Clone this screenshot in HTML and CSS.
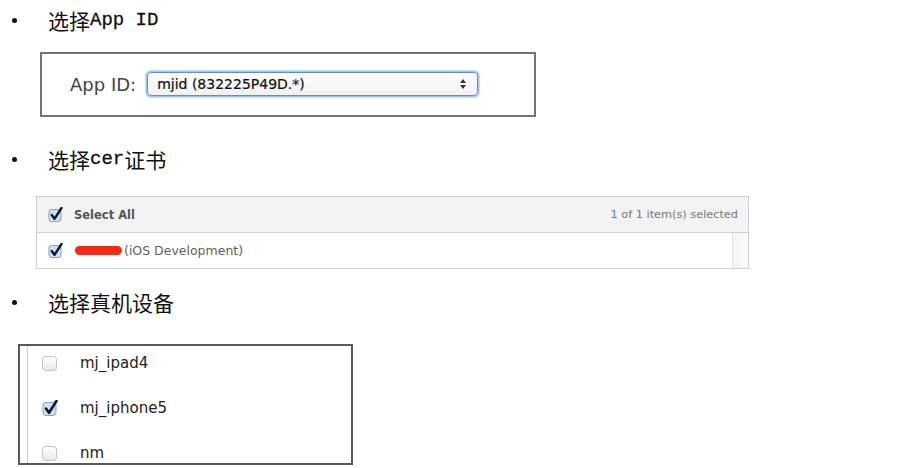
FILE: index.html
```html
<!DOCTYPE html>
<html lang="zh-CN">
<head>
<meta charset="utf-8">
<title>Provisioning</title>
<link rel="stylesheet" href="styles.css">
</head>
<body>
<div class="heading h1"><span class="bullet"></span><span class="cjk">选择</span><span class="mono">App ID</span></div>

<div class="appbox">
  <span class="applabel">App ID:</span>
  <div class="select">
    <span class="seltext">mjid (832225P49D.*)</span>
    <svg class="arrows" width="8" height="12" viewBox="0 0 8 12"><path d="M4 1 L7 5 H1 Z" fill="#333"/><path d="M4 11 L7 7 H1 Z" fill="#333"/></svg>
  </div>
</div>

<div class="heading h2"><span class="bullet"></span><span class="cjk">选择</span><span class="mono">cer</span><span class="cjk">证书</span></div>

<div class="table">
  <div class="thead">
    <svg class="cb" width="15" height="15" viewBox="0 0 15 15"><rect x="1" y="2.5" width="12" height="12" rx="2.5" fill="#cfe0f4" stroke="#8d9db3"/><path d="M3.8 8 L6.5 11.8 L13.5 1" fill="none" stroke="#0c1733" stroke-width="2.4" stroke-linecap="round" stroke-linejoin="round"/></svg>
    <span class="selall">Select All</span>
    <span class="count">1 of 1 item(s) selected</span>
  </div>
  <div class="trow">
    <div class="tcell">
      <svg class="cb" width="15" height="15" viewBox="0 0 15 15"><rect x="1" y="2.5" width="12" height="12" rx="2.5" fill="#cfe0f4" stroke="#8d9db3"/><path d="M3.8 8 L6.5 11.8 L13.5 1" fill="none" stroke="#0c1733" stroke-width="2.4" stroke-linecap="round" stroke-linejoin="round"/></svg>
      <span class="redact"></span><span class="certname">(iOS Development)</span>
    </div>
    <div class="scroll"></div>
  </div>
</div>

<div class="heading h3"><span class="bullet"></span><span class="cjk">选择真机设备</span></div>

<div class="devbox">
  <div class="devinner">
    <div class="dev"><span class="ucb"></span><span class="devname">mj_ipad4</span></div>
    <div class="dev"><svg class="cb big" width="16" height="16" viewBox="0 0 16 16"><rect x="1" y="2.5" width="13" height="13" rx="3" fill="#cfe0f4" stroke="#8d9db3"/><path d="M4 8.5 L7 12.8 L14.5 1" fill="none" stroke="#0c1733" stroke-width="2.6" stroke-linecap="round" stroke-linejoin="round"/></svg><span class="devname tight">mj_iphone5</span></div>
    <div class="dev"><span class="ucb"></span><span class="devname">nm</span></div>
  </div>
</div>
</body>
</html>
```

FILE: styles.css
```css
html, body {
  margin: 0;
  padding: 0;
  background: #ffffff;
}
body {
  width: 901px;
  height: 468px;
  overflow: hidden;
  font-family: "DejaVu Sans", sans-serif;
}
.heading {
  display: flex;
  align-items: center;
  height: 28px;
  padding-left: 12px;
  color: #111;
}
.h1 { margin-top: 6px; }
.h2 { margin-top: 28px; }
.h3 { margin-top: 19px; }
.bullet {
  width: 5px;
  height: 5px;
  border-radius: 50%;
  background: #111;
  margin-right: 31px;
}
.cjk {
  font-family: "Noto Sans CJK SC", sans-serif;
  font-size: 21px;
  line-height: 28px;
}
.mono {
  font-family: "Liberation Mono", monospace;
  font-size: 19px;
  line-height: 28px;
  font-weight: 500;
  -webkit-text-stroke: 0.3px #111;
}

.appbox {
  margin: 18px 0 0 40px;
  width: 496px;
  height: 65px;
  box-sizing: border-box;
  border: 2px solid #727272;
  display: flex;
  align-items: center;
  padding-left: 28px;
  padding-bottom: 1px;
}
.applabel {
  font-size: 18px;
  color: #444;
  margin-right: 11px;
}
.select {
  width: 331px;
  height: 24px;
  box-sizing: border-box;
  border: 1px solid #5a8fd2;
  border-radius: 4px;
  box-shadow: 0 0 0 1.5px #a8c7ee, 0 0 3px 1px #c9dcf3;
  background: linear-gradient(#ffffff, #f1f1f1);
  display: flex;
  align-items: center;
  padding: 0 10px 0 9px;
}
.seltext {
  flex: 1;
  font-size: 14px;
  color: #111;
  -webkit-text-stroke: 0.2px #111;
}
.arrows { display: block; }

.table {
  margin: 23px 0 0 36px;
  width: 713px;
  border: 1px solid #cfcfcf;
  box-sizing: border-box;
}
.thead {
  height: 35px;
  background: #f3f3f3;
  border-bottom: 1px solid #d0d0d0;
  display: flex;
  align-items: center;
  padding-left: 11px;
  padding-right: 10px;
}
.cb { display: block; flex: none; }
.selall {
  font-weight: bold;
  font-size: 11.5px;
  color: #555;
  margin-left: 11px;
  flex: 1;
}
.count {
  font-size: 11.3px;
  color: #777;
}
.trow {
  height: 35px;
  display: flex;
}
.tcell {
  flex: 1;
  display: flex;
  align-items: center;
  padding-left: 11px;
}
.redact {
  width: 47px;
  height: 9px;
  border-radius: 5px;
  background: #f42a18;
  margin-left: 12px;
}
.certname {
  font-size: 12.5px;
  color: #5f5f5f;
  margin-left: 2px;
}
.scroll {
  width: 15px;
  border-left: 1px solid #e2e2e2;
  background: linear-gradient(90deg, #f4f4f4, #fbfbfb);
}

.devbox {
  margin: 28px 0 0 18px;
  width: 335px;
  height: 121px;
  box-sizing: border-box;
  border: 2px solid #5a5a5a;
  overflow: hidden;
}
.devinner {
  margin-left: 7px;
  border-left: 1px solid #cdcdcd;
  height: 100%;
  padding-left: 14px;
}
.dev {
  height: 45px;
  box-sizing: border-box;
  padding-top: 9px;
  display: flex;
}
.ucb {
  width: 15px;
  height: 15px;
  margin-top: 1px;
  box-sizing: border-box;
  border: 1px solid #c2c2c2;
  border-radius: 3.5px;
  background: linear-gradient(#ffffff, #e9e9e9);
  flex: none;
}
.devname {
  font-size: 15px;
  line-height: 17px;
  color: #222;
  margin-left: 23px;
}
.devname.tight { margin-left: 22px; }
```
